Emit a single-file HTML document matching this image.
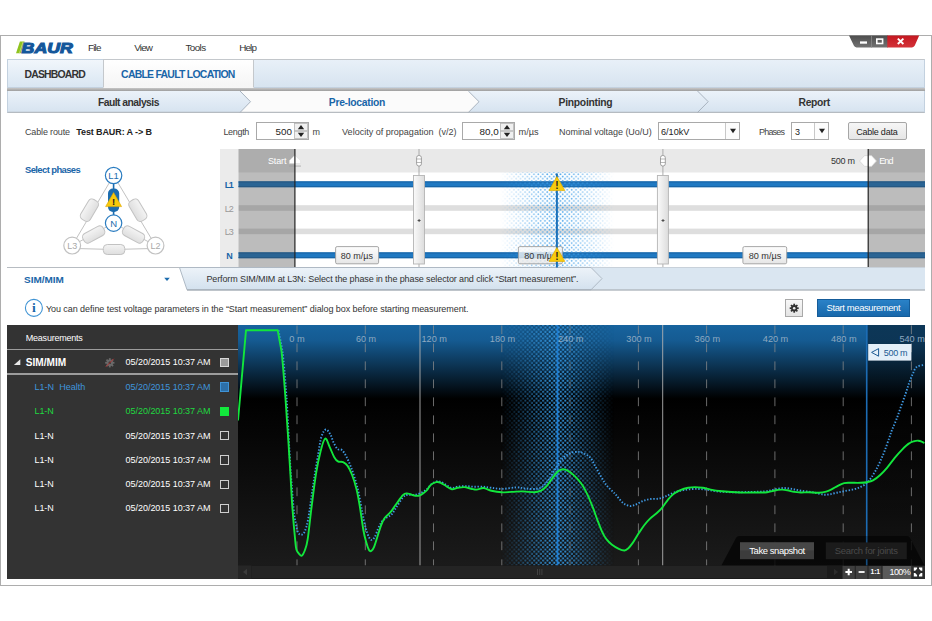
<!DOCTYPE html>
<html><head><meta charset="utf-8"><title>BAUR Cable Fault Location</title>
<style>
html,body{margin:0;padding:0;background:#fff;}
body{width:932px;height:621px;position:relative;overflow:hidden;font-family:"Liberation Sans", sans-serif;}
.a{position:absolute;box-sizing:border-box;}
.t{position:absolute;white-space:pre;line-height:16px;height:16px;}
svg{position:absolute;overflow:visible;}
svg text{font-family:"Liberation Sans", sans-serif;}
</style></head><body>
<!-- window frame -->
<div class="a" style="left:0;top:35px;width:932px;height:551px;border:1px solid #adadad;background:#fff;"></div>

<!-- logo -->
<svg style="left:14px;top:38px" width="64" height="18" viewBox="14 38 64 18">
 <polygon points="16,53.3 19.9,41.6 24.6,41.6 20.7,53.3" fill="#8fc31f"/>
 <polygon points="18.9,53.3 22.8,41.6 23.6,41.6 19.7,53.3" fill="#c3e07e"/>
 <text x="21.6" y="52.7" font-size="14.7" font-weight="700" font-style="italic" fill="#14579b" textLength="51.2" lengthAdjust="spacingAndGlyphs" stroke="#14579b" stroke-width="1.1" stroke-linejoin="miter">BAUR</text>
</svg>

<!-- window buttons -->
<svg style="left:846px;top:35px" width="78" height="16" viewBox="846 35 78 16">
 <defs>
  <linearGradient id="wbg" x1="0" y1="0" x2="0" y2="1"><stop offset="0" stop-color="#4c4c4c"/><stop offset="1" stop-color="#747474"/></linearGradient>
  <linearGradient id="wbr" x1="0" y1="0" x2="0" y2="1"><stop offset="0" stop-color="#c4161f"/><stop offset="1" stop-color="#d4343a"/></linearGradient>
  <clipPath id="wbc"><path d="M849 35.5 L919.2 35.5 L914.8 45.6 Q914 47.4 912 47.4 L856.5 47.4 Q854.6 47.4 853.8 45.6 Z"/></clipPath>
 </defs>
 <g clip-path="url(#wbc)">
  <rect x="846" y="35" width="42" height="13" fill="url(#wbg)"/>
  <rect x="887.3" y="35" width="36" height="13" fill="url(#wbr)"/>
  <rect x="871.2" y="35" width="0.8" height="13" fill="#8a8a8a"/>
 </g>
 <rect x="860" y="41.4" width="7" height="2.3" fill="#fff"/>
 <rect x="876.8" y="39.1" width="5.8" height="4.4" fill="none" stroke="#fff" stroke-width="1.6"/>
 <path d="M897.8 38.6 L903.4 44 M903.4 38.6 L897.8 44" stroke="#fff" stroke-width="1.9" fill="none"/>
</svg>

<!-- tab bar -->
<div class="a" style="left:7px;top:59px;width:918px;height:29px;border:1px solid #c3d1df;border-top-color:#c2c6ca;background:linear-gradient(#e8f0f8,#d7e4f0);"></div>
<div class="a" style="left:7px;top:59px;width:97px;height:29px;border:1px solid #c3d1df;background:linear-gradient(#f1f6fb,#d9e6f2);"></div>
<div class="a" style="left:103px;top:59px;width:151px;height:29px;border:1px solid #c4c8cc;border-bottom-color:#f6f6f6;background:linear-gradient(#fff,#f5f5f5);"></div>
<!-- gray line -->
<div class="a" style="left:7px;top:87.5px;width:918px;height:3.5px;background:linear-gradient(#c6c6c6,#9e9e9e);"></div>

<!-- steps bar -->
<svg style="left:7px;top:91px" width="918" height="22" viewBox="7 91 918 22">
 <defs>
  <linearGradient id="stg" x1="0" y1="0" x2="0" y2="1"><stop offset="0" stop-color="#ebf2f9"/><stop offset="1" stop-color="#d6e3f0"/></linearGradient>
 </defs>
 <rect x="7" y="91" width="918" height="21.5" fill="url(#stg)"/>
 <path d="M240 91 L250.5 101.7 L240 112.5 L468.3 112.5 L479 101.7 L468.3 91 Z" fill="#fbfbfb"/>
 <path d="M240 91 L250.5 101.7 L240 112.5" fill="none" stroke="#a9b4c0" stroke-width="1"/>
 <path d="M468.3 91 L479 101.7 L468.3 112.5" fill="none" stroke="#a9b4c0" stroke-width="1"/>
 <path d="M697.5 91 L708.2 101.7 L697.5 112.5" fill="none" stroke="#a9b4c0" stroke-width="1"/>
 <rect x="7" y="111.8" width="918" height="1" fill="#a8adb3"/>
 <rect x="7" y="91" width="1" height="21.5" fill="#c3d1df"/>
 <rect x="924" y="91" width="1" height="21.5" fill="#c3d1df"/>
</svg>

<!-- inputs row -->
<div class="a" style="left:256px;top:122px;width:53px;height:18px;border:1px solid #a9a9a9;background:#fff;"></div>
<svg style="left:294px;top:123px" width="14" height="16" viewBox="0 0 14 16">
 <rect x="0.5" y="0.5" width="13" height="7.2" fill="#f0f0f0" stroke="#b5b5b5" stroke-width="0.8"/>
 <rect x="0.5" y="8.3" width="13" height="7.2" fill="#f0f0f0" stroke="#b5b5b5" stroke-width="0.8"/>
 <path d="M3.8 6.3 L7 2 L10.2 6.3 Z" fill="#222"/><path d="M3.8 9.8 L7 14 L10.2 9.8 Z" fill="#222"/>
</svg>
<div class="a" style="left:462px;top:122px;width:53px;height:18px;border:1px solid #a9a9a9;background:#fff;"></div>
<svg style="left:500px;top:123px" width="14" height="16" viewBox="0 0 14 16">
 <rect x="0.5" y="0.5" width="13" height="7.2" fill="#f0f0f0" stroke="#b5b5b5" stroke-width="0.8"/>
 <rect x="0.5" y="8.3" width="13" height="7.2" fill="#f0f0f0" stroke="#b5b5b5" stroke-width="0.8"/>
 <path d="M3.8 6.3 L7 2 L10.2 6.3 Z" fill="#222"/><path d="M3.8 9.8 L7 14 L10.2 9.8 Z" fill="#222"/>
</svg>
<div class="a" style="left:658px;top:122px;width:82px;height:18px;border:1px solid #a9a9a9;background:#fff;"></div>
<div class="a" style="left:725px;top:123px;width:14px;height:16px;border-left:1px solid #c8c8c8;background:#fcfcfc;"></div>
<svg style="left:729px;top:128px" width="8" height="6" viewBox="0 0 8 6"><path d="M1 0.8 L7 0.8 L4 5.2 Z" fill="#222"/></svg>
<div class="a" style="left:791px;top:122px;width:38px;height:18px;border:1px solid #a9a9a9;background:#fff;"></div>
<div class="a" style="left:814px;top:123px;width:14px;height:16px;border-left:1px solid #c8c8c8;background:#fcfcfc;"></div>
<svg style="left:818px;top:128px" width="8" height="6" viewBox="0 0 8 6"><path d="M1 0.8 L7 0.8 L4 5.2 Z" fill="#222"/></svg>
<div class="a" style="left:848px;top:122px;width:59px;height:18px;border:1px solid #a6a6a6;border-radius:2px;background:linear-gradient(#f6f6f6,#e6e6e6);"></div>

<!-- phase selector -->
<svg style="left:60px;top:160px" width="110" height="100" viewBox="60 160 110 100">
 <defs>
  <linearGradient id="pill" x1="0" y1="0" x2="0" y2="1"><stop offset="0" stop-color="#f4f4f4"/><stop offset="1" stop-color="#dedede"/></linearGradient>
 </defs>
 <g stroke="#c2c2c2" stroke-width="1" fill="none">
  <line x1="113.6" y1="175.5" x2="72.2" y2="245.6"/>
  <line x1="113.6" y1="175.5" x2="155.5" y2="245.6"/>
  <line x1="113.6" y1="223.1" x2="72.2" y2="245.6"/>
  <line x1="113.6" y1="223.1" x2="155.5" y2="245.6"/>
  <path d="M76 248.5 Q113.6 250.5 151.5 248.5"/>
 </g>
 <line x1="113.6" y1="180" x2="113.6" y2="218" stroke="#1c6cae" stroke-width="1.6"/>
 <g fill="url(#pill)" stroke="#c2c2c2" stroke-width="1">
  <rect x="-11.5" y="-5.5" width="23" height="11" rx="4" transform="translate(89.4 210.2) rotate(-59.4)"/>
  <rect x="-11.5" y="-5.5" width="23" height="11" rx="4" transform="translate(137.8 210.2) rotate(59.4)"/>
  <rect x="-11.5" y="-5.2" width="23" height="10.4" rx="4" transform="translate(93.7 234.5) rotate(-28.5)"/>
  <rect x="-11.5" y="-5.2" width="23" height="10.4" rx="4" transform="translate(133.5 234.5) rotate(28.5)"/>
  <rect x="103.3" y="244.5" width="21.5" height="10" rx="4"/>
 </g>
 <rect x="108" y="188.5" width="11.2" height="23.5" rx="5" fill="#1c6cae"/>
 <circle cx="113.6" cy="175.5" r="8.2" fill="#fff" stroke="#2a7cc0" stroke-width="1.2"/>
 <circle cx="113.6" cy="223.1" r="8.2" fill="#fff" stroke="#2a7cc0" stroke-width="1.2"/>
 <circle cx="72.2" cy="245.6" r="8.4" fill="#fff" stroke="#c2c2c2" stroke-width="1.2"/>
 <circle cx="155.5" cy="245.6" r="8.4" fill="#fff" stroke="#c2c2c2" stroke-width="1.2"/>
 <text x="113.6" y="179" font-size="9.5" text-anchor="middle" fill="#1c6cae">L1</text>
 <text x="113.6" y="226.6" font-size="9.5" text-anchor="middle" fill="#1c6cae">N</text>
 <text x="72.2" y="249" font-size="9" text-anchor="middle" fill="#a9a9a9">L3</text>
 <text x="155.5" y="249" font-size="9" text-anchor="middle" fill="#a9a9a9">L2</text>
 <path d="M113.6 192.6 L121.6 206.6 L105.6 206.6 Z" fill="#f7c90c" stroke="#e0a800" stroke-width="0.6" stroke-linejoin="round"/>
 <text x="113.6" y="205.4" font-size="9.5" font-weight="700" text-anchor="middle" fill="#1c1c1c">!</text>
</svg>

<!-- cable diagram -->
<svg style="left:220px;top:149px" width="705" height="119" viewBox="220 149 705 119">
 <defs>
  <pattern id="dots" x="0" y="0" width="4.44" height="4.44" patternUnits="userSpaceOnUse">
   <circle cx="1.11" cy="1.11" r="0.92" fill="#3a9ce8"/><circle cx="3.33" cy="3.33" r="0.92" fill="#3a9ce8"/>
  </pattern>
  <linearGradient id="fade" x1="0" y1="0" x2="1" y2="0"><stop offset="0" stop-color="#fff" stop-opacity="0"/><stop offset="0.5" stop-color="#fff" stop-opacity="1"/><stop offset="1" stop-color="#fff" stop-opacity="0"/></linearGradient>
  <mask id="fm" maskUnits="userSpaceOnUse" x="500" y="172" width="114" height="96"><rect x="500" y="172" width="114" height="96" fill="url(#fade)"/></mask>
  <linearGradient id="jg" x1="0" y1="0" x2="1" y2="0"><stop offset="0" stop-color="#fafafa"/><stop offset="1" stop-color="#dcdcdc"/></linearGradient>
  <linearGradient id="lbl" x1="0" y1="0" x2="0" y2="1"><stop offset="0" stop-color="#fdfdfd"/><stop offset="1" stop-color="#e6e6e6"/></linearGradient>
 </defs>
 <rect x="220" y="149" width="705" height="118.5" fill="#fff"/>
 <rect x="220" y="149" width="705" height="23.5" fill="#e9e9e9"/>
 <rect x="220" y="149" width="18.5" height="118.5" fill="#ebebeb"/>
 <!-- phase lines -->
 <rect x="238.5" y="205.2" width="686.5" height="5.6" fill="#dedede"/>
 <rect x="238.5" y="228.6" width="686.5" height="5.6" fill="#dedede"/>
 <rect x="238.5" y="181.4" width="686.5" height="5.8" fill="#2079c2"/>
 <rect x="238.5" y="181.4" width="686.5" height="1.1" fill="#1864a6"/><rect x="238.5" y="186.1" width="686.5" height="1.1" fill="#1864a6"/>
 <rect x="238.5" y="252.4" width="686.5" height="5.8" fill="#2079c2"/>
 <rect x="238.5" y="252.4" width="686.5" height="1.1" fill="#1864a6"/><rect x="238.5" y="257.1" width="686.5" height="1.1" fill="#1864a6"/>
 <!-- halftone -->
 <rect x="500" y="172.2" width="114" height="95.3" fill="url(#dots)" mask="url(#fm)"/>
 <!-- start/end shades -->
 <rect x="238.5" y="149" width="56.3" height="118.5" fill="#404040" fill-opacity="0.35"/>
 <rect x="868.2" y="149" width="56.8" height="118.5" fill="#404040" fill-opacity="0.35"/>
 <!-- start / end markers -->
 <path d="M294.8 155.2 L300.6 160.6 L300.6 163.6 L289.4 163.6 L289.4 160.6 Z" fill="#fff" stroke="#d8d8d8" stroke-width="0.5"/>
 <rect x="289.2" y="165.7" width="11.8" height="0.7" fill="#9c9c9c"/>
 <path d="M859.5 161 L864.5 155.6 L871.5 155.6 L876.5 161 L871.5 166.4 L864.5 166.4 Z" fill="#fff" stroke="#d0d0d0" stroke-width="0.7"/>
 <rect x="294.3" y="149" width="1.2" height="118.5" fill="#222"/>
 <rect x="867.6" y="149" width="1.2" height="118.5" fill="#222"/>
 <!-- joints -->
 <g>
  <line x1="419" y1="149" x2="419" y2="267.5" stroke="#9a9a9a" stroke-width="0.8"/>
  <rect x="416.6" y="155.5" width="4.8" height="10.5" rx="2.2" fill="#fff" stroke="#8c8c8c" stroke-width="0.8"/>
  <line x1="416.6" y1="159" x2="421.4" y2="159" stroke="#8c8c8c" stroke-width="0.6"/><line x1="416.6" y1="162.5" x2="421.4" y2="162.5" stroke="#8c8c8c" stroke-width="0.6"/>
  <rect x="413.5" y="175.5" width="11" height="88.5" fill="url(#jg)" stroke="#b4b4b4" stroke-width="0.9"/>
  <path d="M417.6 220.5 h3 M419.1 219 v3" stroke="#444" stroke-width="0.9"/>
 </g>
 <g>
  <line x1="662.9" y1="149" x2="662.9" y2="267.5" stroke="#9a9a9a" stroke-width="0.8"/>
  <rect x="660.5" y="155.5" width="4.8" height="10.5" rx="2.2" fill="#fff" stroke="#8c8c8c" stroke-width="0.8"/>
  <line x1="660.5" y1="159" x2="665.3" y2="159" stroke="#8c8c8c" stroke-width="0.6"/><line x1="660.5" y1="162.5" x2="665.3" y2="162.5" stroke="#8c8c8c" stroke-width="0.6"/>
  <rect x="657.4" y="175.5" width="11" height="88.5" fill="url(#jg)" stroke="#b4b4b4" stroke-width="0.9"/>
  <path d="M661.5 220.5 h3 M663 219 v3" stroke="#444" stroke-width="0.9"/>
 </g>
 <!-- velocity labels -->
 <rect x="335.6" y="246.6" width="43" height="17.2" rx="1.5" fill="url(#lbl)" stroke="#9e9e9e" stroke-width="0.9"/>
 <rect x="518.4" y="246.6" width="44" height="17.2" rx="1.5" fill="url(#lbl)" fill-opacity="0.8" stroke="#9e9e9e" stroke-width="0.9"/>
 <rect x="742.9" y="246.6" width="43.8" height="17.2" rx="1.5" fill="url(#lbl)" stroke="#9e9e9e" stroke-width="0.9"/>
</svg>
<!-- SIM/MIM bar -->
<svg style="left:7px;top:267px" width="918" height="24" viewBox="7 267 918 24">
 <defs>
  <linearGradient id="mg" x1="0" y1="0" x2="0" y2="1"><stop offset="0" stop-color="#edf3f9"/><stop offset="1" stop-color="#d3e1ee"/></linearGradient>
 </defs>
 <rect x="7" y="267" width="918" height="1" fill="#b7bcc2"/>
 <path d="M179.5 267.5 L925 267.5 L925 289.8 L187 289.8 Z" fill="#dae6f1"/>
 <path d="M179.5 267.5 L591 267.5 L602 278.6 L591 289.8 L187 289.8 Z" fill="url(#mg)" stroke="#a9b4c0" stroke-width="0.9"/>
 <rect x="187" y="289.4" width="738" height="1.2" fill="#a3abb4"/>
 <path d="M164.2 277.8 L169.8 277.8 L167 281 Z" fill="#1c6cae"/>
</svg>

<!-- info row -->
<svg style="left:23px;top:297px" width="22" height="22" viewBox="23 297 22 22">
 <circle cx="33.9" cy="307.9" r="8.5" fill="#fff" stroke="#3f93d3" stroke-width="1.1"/>
 <text x="33.9" y="312.4" font-size="13.5" font-weight="700" text-anchor="middle" fill="#1965a8" style="font-family:'Liberation Serif',serif">i</text>
</svg>
<div class="a" style="left:785px;top:299px;width:18px;height:18px;border:1px solid #a9a9a9;background:linear-gradient(#f8f8f8,#e4e4e4);"></div>
<svg style="left:788.8px;top:302.8px" width="10.4" height="10.4" viewBox="-6 -6 12 12">
 <g fill="#333"><circle r="3.6"/>
 <rect x="-1" y="-5.2" width="2" height="10.4"/><rect x="-5.2" y="-1" width="10.4" height="2"/>
 <rect x="-1" y="-5.2" width="2" height="10.4" transform="rotate(45)"/><rect x="-5.2" y="-1" width="10.4" height="2" transform="rotate(45)"/></g>
 <circle r="1.5" fill="#f0f0f0"/>
</svg>
<div class="a" style="left:817px;top:299px;width:93px;height:18px;background:linear-gradient(#2a82c8,#1868ab);border:1px solid #155c99;"></div>

<!-- dark area -->
<div class="a" style="left:7.4px;top:325px;width:230.6px;height:254px;background:#333;"></div>
<div class="a" style="left:7.4px;top:348.8px;width:230.6px;height:1.6px;background:#9c9c9c;"></div>
<div class="a" style="left:7.4px;top:373.3px;width:230.6px;height:1.6px;background:#9c9c9c;"></div>
<svg style="left:13px;top:358px" width="9" height="8" viewBox="13 358 9 8"><path d="M20.3 359.2 L20.3 365 L13.9 365 Z" fill="#e8e8e8"/></svg>
<svg style="left:104.4px;top:356.6px" width="11.6" height="11.6" viewBox="-6.5 -6.5 13 13">
 <g fill="#6a6a6a"><circle r="3.6"/><rect x="-1" y="-5.2" width="2" height="10.4"/><rect x="-5.2" y="-1" width="10.4" height="2"/><rect x="-1" y="-5.2" width="2" height="10.4" transform="rotate(45)"/><rect x="-5.2" y="-1" width="10.4" height="2" transform="rotate(45)"/></g>
 <circle r="1.4" fill="#333"/><line x1="-4.5" y1="4.5" x2="4.5" y2="-4.5" stroke="#b03030" stroke-width="1.1"/>
</svg>
<div class="a" style="left:219.5px;top:357.5px;width:9.5px;height:9.5px;border:1px solid #d6d6d6;background:#9a9a9a;"></div>
<div class="a" style="left:219.5px;top:382.3px;width:9.5px;height:9.5px;border:1px solid #3f93d6;background:#2c6fa8;"></div>
<div class="a" style="left:219.5px;top:406.8px;width:9.5px;height:9.5px;background:#12e83c;"></div>
<div class="a" style="left:219.5px;top:430.9px;width:9.5px;height:9.5px;border:1px solid #cfcfcf;"></div>
<div class="a" style="left:219.5px;top:455.3px;width:9.5px;height:9.5px;border:1px solid #cfcfcf;"></div>
<div class="a" style="left:219.5px;top:479.6px;width:9.5px;height:9.5px;border:1px solid #cfcfcf;"></div>
<div class="a" style="left:219.5px;top:503.7px;width:9.5px;height:9.5px;border:1px solid #cfcfcf;"></div>

<!-- chart -->
<svg style="left:238px;top:325px" width="687" height="254" viewBox="238 325 687 254">
 <defs>
  <linearGradient id="cbg" x1="0" y1="0" x2="0" y2="1">
   <stop offset="0" stop-color="#17639e"/><stop offset="0.06" stop-color="#155b92"/><stop offset="0.29" stop-color="#000"/><stop offset="1" stop-color="#1d1d1d"/>
  </linearGradient>
  <linearGradient id="cbg2" x1="0" y1="0" x2="0" y2="1">
   <stop offset="0" stop-color="#000" stop-opacity="0.45"/><stop offset="0.29" stop-color="#000" stop-opacity="0.3"/><stop offset="1" stop-color="#000" stop-opacity="0.25"/>
  </linearGradient>
  <pattern id="dots2" x="0.3" y="0" width="4.44" height="4.44" patternUnits="userSpaceOnUse">
   <circle cx="1.11" cy="1.11" r="1.12" fill="#379ce6"/><circle cx="3.33" cy="3.33" r="1.12" fill="#379ce6"/>
  </pattern>
  <linearGradient id="fade2" x1="0" y1="0" x2="1" y2="0"><stop offset="0" stop-color="#fff" stop-opacity="0"/><stop offset="0.5" stop-color="#fff" stop-opacity="1"/><stop offset="1" stop-color="#fff" stop-opacity="0"/></linearGradient>
  <mask id="fm2" maskUnits="userSpaceOnUse" x="501" y="325" width="113" height="241"><rect x="501" y="325" width="113" height="241" fill="url(#fade2)"/></mask>
  <clipPath id="cc"><rect x="238" y="325" width="687" height="240.5"/></clipPath>
 </defs>
 <rect x="238" y="325" width="687" height="254" fill="url(#cbg)"/>
 <rect x="867.5" y="325" width="57.5" height="241" fill="url(#cbg2)"/>
 <rect x="501" y="325" width="113" height="240.5" fill="#000" fill-opacity="0.32" mask="url(#fm2)"/>
 <rect x="501" y="325" width="113" height="240.5" fill="url(#dots2)" mask="url(#fm2)"/>
 <g stroke="#8c8c8c" stroke-opacity="0.75" stroke-width="1" stroke-dasharray="8.8 9.2" clip-path="url(#cc)">
  <line x1="297" y1="325.4" x2="297" y2="566"/><line x1="365.3" y1="325.4" x2="365.3" y2="566"/><line x1="433.5" y1="325.4" x2="433.5" y2="566"/><line x1="501.8" y1="325.4" x2="501.8" y2="566"/><line x1="570.1" y1="325.4" x2="570.1" y2="566" stroke-opacity="0.5"/><line x1="638.4" y1="325.4" x2="638.4" y2="566"/><line x1="706.6" y1="325.4" x2="706.6" y2="566"/><line x1="774.9" y1="325.4" x2="774.9" y2="566"/><line x1="843.2" y1="325.4" x2="843.2" y2="566"/><line x1="911.4" y1="325.4" x2="911.4" y2="566"/>
 </g>
 <line x1="420" y1="325" x2="420" y2="565.5" stroke="#b0b0b0" stroke-width="0.9"/>
 <line x1="662.7" y1="325" x2="662.7" y2="565.5" stroke="#b0b0b0" stroke-width="0.9"/>
 <line x1="557.5" y1="325" x2="557.5" y2="565.5" stroke="#1f7acc" stroke-width="1.8"/>
 <line x1="866.7" y1="325" x2="866.7" y2="565.5" stroke="#1c6cb4" stroke-width="1.6"/>
 <g clip-path="url(#cc)">
  <path d="M278.5 330.3 L282.5 351.0 C283.8 362.2 285.2 378.7 286.5 397.3 C287.8 415.9 288.9 444.1 290.1 462.5 C291.3 480.9 292.6 497.5 293.5 507.6 C294.4 517.8 295.1 519.3 295.8 523.4 C296.6 527.5 297.1 530.5 298.0 532.4 C298.9 534.3 300.3 534.9 301.4 534.7 C302.5 534.5 303.7 533.9 304.8 531.3 C305.9 528.7 307.1 524.7 308.2 518.9 C309.3 513.1 310.4 503.9 311.5 496.4 C312.6 488.9 313.8 480.9 314.9 473.8 C316.0 466.7 317.2 459.7 318.3 453.5 C319.4 447.3 320.2 440.5 321.5 436.5 C322.8 432.5 324.4 429.8 325.9 429.5 C327.4 429.2 329.2 432.6 330.5 434.7 C331.8 436.8 332.3 439.9 333.5 442.3 C334.7 444.7 336.1 447.7 337.5 449.0 C338.9 450.3 340.5 448.8 342.0 450.1 C343.5 451.4 345.0 454.1 346.5 456.9 C348.0 459.7 349.5 463.2 351.0 467.1 C352.5 471.1 354.2 476.1 355.5 480.6 C356.8 485.1 357.8 488.8 358.9 494.1 C360.0 499.4 361.2 506.6 362.3 512.2 C363.4 517.8 364.6 523.7 365.7 527.9 C366.8 532.1 368.0 535.4 369.0 537.4 C370.0 539.4 370.8 540.0 371.7 539.9 C372.6 539.8 373.6 538.8 374.7 537.0 C375.8 535.2 376.9 531.5 378.0 529.0 C379.1 526.5 380.1 524.1 381.4 522.3 C382.7 520.5 384.2 519.5 385.9 518.2 C387.6 516.9 389.9 516.2 391.6 514.4 C393.3 512.6 394.2 510.4 396.1 507.6 C398.0 504.8 401.0 499.6 402.9 497.5 C404.8 495.4 405.5 495.2 407.4 494.8 C409.3 494.4 411.9 495.1 414.1 494.8 C416.4 494.5 418.6 494.1 420.9 493.0 C423.2 491.9 425.9 490.0 427.7 488.5 C429.5 487.0 430.0 485.2 431.6 484.0 C433.2 482.8 435.6 481.6 437.3 481.3 C439.0 481.0 440.1 481.6 441.8 482.4 C443.5 483.1 445.7 484.9 447.4 485.8 C449.1 486.7 450.2 487.9 451.9 488.0 C453.6 488.1 455.3 487.0 457.6 486.7 C459.9 486.4 462.9 486.2 465.5 486.2 C468.1 486.2 470.6 486.6 473.4 486.7 C476.2 486.8 479.4 486.5 482.4 486.7 C485.4 486.9 488.0 487.4 491.4 487.8 C494.8 488.2 498.6 489.0 502.7 488.9 C506.8 488.8 512.5 487.5 516.2 487.4 C520.0 487.3 521.8 488.2 525.2 488.5 C528.6 488.8 533.5 489.3 536.5 488.9 C539.5 488.5 541.1 487.8 543.2 486.2 C545.3 484.6 547.0 482.1 548.9 479.5 C550.8 476.9 552.6 473.4 554.5 470.4 C556.4 467.4 558.3 463.8 560.2 461.4 C562.1 459.0 563.7 457.3 565.8 455.8 C567.9 454.3 570.4 453.0 572.6 452.4 C574.9 451.8 577.2 451.7 579.3 452.0 C581.4 452.3 583.1 453.0 585.0 454.0 C586.9 455.0 588.9 456.0 590.6 458.0 C592.3 460.0 593.4 462.9 595.1 465.9 C596.8 468.9 598.8 472.9 600.7 476.1 C602.6 479.3 604.3 482.5 606.4 485.1 C608.5 487.7 611.5 490.3 613.1 491.9 C614.7 493.5 614.8 493.4 616.0 494.8 C617.2 496.2 619.0 498.8 620.5 500.4 C622.0 502.0 623.3 503.4 625.0 504.3 C626.7 505.2 628.8 506.1 630.7 506.1 C632.6 506.1 634.2 505.2 636.3 504.3 C638.4 503.4 640.9 501.8 643.1 500.9 C645.4 500.0 647.2 499.5 649.8 499.1 C652.4 498.7 656.2 499.1 658.8 498.6 C661.4 498.2 663.0 497.4 665.6 496.4 C668.2 495.3 671.6 493.4 674.6 492.3 C677.6 491.2 680.2 490.7 683.6 490.1 C687.0 489.5 691.1 489.0 694.9 488.9 C698.7 488.8 702.4 489.2 706.2 489.6 C710.0 490.0 713.0 490.9 717.5 491.4 C722.0 491.8 727.6 492.2 733.2 492.3 C738.8 492.4 746.0 492.0 751.3 491.9 C756.6 491.8 761.0 491.8 764.8 491.4 C768.5 491.0 770.8 490.2 773.8 489.6 C776.8 489.0 779.9 488.1 782.9 488.0 C785.9 487.9 788.9 488.4 791.9 488.9 C794.9 489.3 797.6 490.2 800.9 490.7 C804.2 491.2 808.7 491.6 811.7 492.1 C814.7 492.6 816.8 493.2 818.9 493.6 C821.0 494.0 822.5 494.6 824.3 494.7 C826.1 494.8 827.6 494.6 829.7 494.3 C831.8 494.0 834.5 493.2 836.9 492.7 C839.3 492.2 841.5 491.8 844.2 491.2 C846.9 490.6 850.5 490.1 853.2 489.4 C855.9 488.7 858.1 488.2 860.4 487.1 C862.6 486.1 864.9 484.7 866.7 483.1 C868.5 481.5 869.7 479.8 871.2 477.7 C872.7 475.6 874.2 473.2 875.7 470.5 C877.2 467.8 878.7 464.8 880.2 461.5 C881.7 458.2 883.2 454.6 884.7 450.7 C886.2 446.8 888.0 441.4 889.2 438.0 C890.4 434.6 890.8 433.1 892.0 430.0 C893.2 426.9 895.0 423.1 896.5 419.2 C898.0 415.3 899.5 410.8 901.0 406.6 C902.5 402.4 904.1 397.9 905.5 394.0 C906.9 390.1 907.9 386.4 909.1 383.1 C910.3 379.8 911.5 376.7 912.7 374.1 C913.9 371.5 914.6 368.8 916.3 367.3 C917.9 365.8 921.2 365.5 922.6 365.1 C924.0 364.7 924.1 365.0 924.4 365.0" fill="none" stroke="#3f9ae4" stroke-width="1.9" stroke-dasharray="1.4 1.7"/>
  <path d="M238.0 420.5 L246.0 330.3 L277.7 330.3 L281.5 351.0 C282.8 362.2 284.3 382.5 285.4 397.3 C286.5 412.1 287.4 426.7 288.3 440.0 C289.2 453.3 289.9 465.9 290.6 477.2 C291.3 488.5 291.6 497.3 292.4 507.6 C293.1 517.9 294.4 532.2 295.1 539.2 C295.8 546.2 295.7 547.0 296.4 549.4 C297.1 551.8 298.2 552.8 299.1 553.9 C300.0 555.0 300.9 556.3 301.8 555.7 C302.8 555.1 303.8 553.2 304.8 550.5 C305.8 547.8 306.6 546.4 307.7 539.2 C308.8 532.1 310.1 518.5 311.5 507.6 C312.9 496.7 314.5 483.2 316.0 473.8 C317.5 464.4 319.1 457.2 320.6 451.3 C322.1 445.4 323.7 439.2 325.2 438.5 C326.7 437.8 328.1 443.7 329.6 446.8 C331.1 449.9 332.7 454.5 334.1 456.9 C335.5 459.3 336.4 460.5 337.9 461.4 C339.4 462.3 341.5 461.4 343.1 462.1 C344.7 462.9 346.1 463.8 347.6 465.9 C349.1 468.0 350.6 471.1 352.1 475.0 C353.6 478.9 355.3 484.2 356.6 489.6 C357.9 495.0 358.9 500.8 360.0 507.6 C361.1 514.4 362.3 524.4 363.4 530.2 C364.4 536.0 365.4 539.3 366.3 542.6 C367.2 545.9 368.2 548.6 369.0 550.0 C369.8 551.4 370.5 551.4 371.3 550.9 C372.1 550.4 372.9 549.8 374.0 547.1 C375.1 544.4 376.8 538.5 378.0 534.7 C379.2 531.0 380.3 527.4 381.4 524.6 C382.5 521.8 383.3 519.9 384.8 517.8 C386.3 515.7 388.6 514.5 390.5 512.2 C392.4 510.0 394.0 507.1 396.1 504.3 C398.2 501.5 401.1 497.0 402.9 495.2 C404.7 493.4 405.2 493.5 406.7 493.4 C408.2 493.3 410.3 494.4 411.9 494.8 C413.5 495.2 414.9 495.9 416.4 495.9 C417.9 495.9 419.2 495.7 420.9 494.8 C422.6 493.9 424.9 492.3 426.5 490.7 C428.1 489.1 428.9 486.5 430.5 485.1 C432.1 483.7 434.4 482.6 436.1 482.2 C437.8 481.8 439.0 482.1 440.7 482.8 C442.4 483.5 444.4 485.1 446.3 486.2 C448.2 487.3 450.0 488.9 451.9 489.2 C453.8 489.5 455.5 488.1 457.6 487.8 C459.7 487.5 462.1 487.0 464.3 487.1 C466.6 487.2 469.0 488.3 471.1 488.7 C473.2 489.1 474.6 489.7 476.7 489.6 C478.8 489.5 481.1 487.8 483.5 488.0 C485.9 488.2 488.4 490.0 491.4 490.7 C494.4 491.4 498.1 492.1 501.5 492.3 C504.9 492.5 508.1 492.0 511.7 491.9 C515.3 491.8 519.2 491.3 523.0 491.4 C526.8 491.5 531.2 492.4 534.2 492.3 C537.2 492.2 538.9 491.7 541.0 490.7 C543.1 489.7 544.7 488.3 546.6 486.2 C548.5 484.1 550.4 480.7 552.3 478.3 C554.2 475.9 556.1 473.1 557.9 471.6 C559.7 470.1 561.2 469.4 562.9 469.3 C564.6 469.2 566.0 469.8 568.0 470.9 C570.0 472.0 572.5 473.9 574.8 476.1 C577.1 478.3 579.5 481.0 581.6 484.0 C583.7 487.0 585.3 490.2 587.2 494.1 C589.1 498.0 591.2 503.3 592.9 507.6 C594.6 511.9 595.9 516.0 597.4 520.0 C598.9 524.0 600.4 528.1 601.9 531.3 C603.4 534.5 604.7 537.0 606.4 539.2 C608.1 541.5 609.9 543.2 612.0 544.8 C614.1 546.4 616.7 547.9 618.8 548.9 C620.9 549.9 623.0 550.6 624.6 550.5 C626.2 550.4 627.0 549.5 628.4 548.2 C629.8 546.9 631.2 545.0 632.9 542.6 C634.6 540.2 636.6 536.5 638.5 533.6 C640.4 530.7 642.3 527.7 644.2 525.2 C646.1 522.8 647.7 520.9 649.8 518.9 C651.9 516.9 654.5 515.2 656.6 513.3 C658.7 511.4 660.3 509.9 662.2 507.6 C664.1 505.4 666.0 502.1 667.9 499.8 C669.8 497.6 671.4 495.7 673.5 494.1 C675.6 492.5 677.8 491.2 680.3 490.1 C682.8 489.1 685.8 488.3 688.2 487.8 C690.6 487.3 692.5 487.1 694.9 487.1 C697.3 487.1 700.2 487.4 702.8 487.8 C705.4 488.2 707.5 489.0 710.7 489.6 C713.9 490.2 717.1 490.7 722.0 491.2 C726.9 491.7 734.4 492.3 740.0 492.5 C745.6 492.7 751.3 492.5 755.8 492.5 C760.3 492.5 764.1 492.6 767.1 492.3 C770.1 492.0 771.4 491.1 773.8 490.7 C776.2 490.2 779.4 489.7 781.7 489.6 C784.0 489.5 785.3 489.9 787.4 490.3 C789.5 490.7 791.9 491.5 794.1 491.9 C796.4 492.3 798.6 492.4 800.9 492.5 C803.2 492.6 805.1 492.3 808.1 492.3 C811.1 492.3 815.9 492.8 818.9 492.7 C821.9 492.6 824.0 492.2 826.1 491.6 C828.2 491.1 829.5 490.4 831.5 489.4 C833.5 488.4 835.7 486.9 837.8 485.8 C839.9 484.8 841.9 483.6 844.2 483.1 C846.5 482.6 848.7 482.9 851.4 482.8 C854.1 482.8 857.8 482.9 860.4 482.8 C863.0 482.7 864.6 482.6 866.7 482.2 C868.8 481.8 870.8 481.6 873.0 480.4 C875.2 479.2 877.8 477.2 880.2 475.0 C882.6 472.8 885.0 470.2 887.4 467.3 C889.8 464.4 892.3 460.8 894.7 457.9 C897.1 455.0 899.5 452.2 901.9 449.8 C904.3 447.4 907.0 444.8 909.1 443.4 C911.2 441.9 913.0 441.6 914.5 441.1 C916.0 440.7 916.9 440.6 918.1 440.7 C919.3 440.8 920.7 441.2 921.7 441.6 C922.8 442.0 924.0 442.9 924.4 443.1" fill="none" stroke="#12e63c" stroke-width="1.9" stroke-linejoin="round"/>
 </g>
 <!-- 500 m flag -->
 <rect x="868.2" y="344" width="43.2" height="16.6" fill="#e4eff9"/>
 <path d="M878.6 348.6 L871.6 352.4 L878.6 356.2 Z" fill="none" stroke="#1c5a94" stroke-width="1"/>
 <!-- toolbar -->
 <path d="M721.4 565.5 L736 538 Q737 536 739.5 536 L906.5 536 Q909 536 910 538 L924.5 565.5 Z" fill="#060606" fill-opacity="0.85"/>
 <line x1="866.7" y1="536" x2="866.7" y2="565.5" stroke="#1c6cb4" stroke-width="1.6" stroke-opacity="0.65"/>
 <rect x="740" y="542.4" width="74" height="16.8" fill="#3c3c3c"/>
 <rect x="740" y="542.4" width="74" height="8" fill="#474747"/>
 <rect x="825.8" y="542.4" width="81" height="16.8" fill="#1b1b1b"/>
 <!-- scrollbar -->
 <rect x="238" y="565.5" width="687" height="13" fill="#1b1b1b"/>
 <rect x="252" y="566" width="575" height="12" fill="#242424"/>
 <rect x="238" y="565.5" width="13.5" height="13" fill="#262626"/>
 <path d="M247 568.8 L243 572 L247 575.2 Z" fill="#3c3c3c"/>
 <path d="M834 568.8 L838 572 L834 575.2 Z" fill="#2c2c2c"/>
 <path d="M537.5 569 v6 M539.7 569 v6 M541.9 569 v6" stroke="#4a4a4a" stroke-width="0.8"/>
 <rect x="842.5" y="566" width="12.3" height="13" fill="#3f3f3f"/>
 <rect x="855.6" y="566" width="12" height="13" fill="#3f3f3f"/>
 <rect x="868.4" y="566" width="13.2" height="13" fill="#3f3f3f"/>
 <rect x="882.5" y="566" width="29" height="13" fill="#5a5a5a"/>
 <rect x="911.5" y="566" width="13.5" height="13" fill="#2c2c2c"/>
 <path d="M845.4 572 h6.6 M848.7 568.7 v6.6" stroke="#fff" stroke-width="2"/>
 <path d="M858.6 572 h6" stroke="#fff" stroke-width="1.8"/>
 <g fill="#fff">
  <path d="M913.8 567.4 h3.3 v1.4 l-1.9 1.9 h-1.4 Z"/><path d="M922.3 567.4 h-3.3 v1.4 l1.9 1.9 h1.4 Z"/>
  <path d="M913.8 576.4 h3.3 v-1.4 l-1.9 -1.9 h-1.4 Z"/><path d="M922.3 576.4 h-3.3 v-1.4 l1.9 -1.9 h1.4 Z"/>
 </g>
</svg>
<span class="t" style="left:88.0px;top:40.0px;font-size:9.90px;letter-spacing:-0.82px;font-weight:400;color:#333;">File</span>
<span class="t" style="left:134.2px;top:40.0px;font-size:9.90px;letter-spacing:-0.83px;font-weight:400;color:#333;">View</span>
<span class="t" style="left:185.5px;top:40.0px;font-size:9.90px;letter-spacing:-0.60px;font-weight:400;color:#333;">Tools</span>
<span class="t" style="left:239.2px;top:40.0px;font-size:9.90px;letter-spacing:-0.85px;font-weight:400;color:#333;">Help</span>
<span class="t" style="left:24.5px;top:66.5px;font-size:10.44px;letter-spacing:-0.83px;font-weight:700;color:#333;">DASHBOARD</span>
<span class="t" style="left:121.1px;top:66.5px;font-size:10.44px;letter-spacing:-0.74px;font-weight:700;color:#1965a8;">CABLE FAULT LOCATION</span>
<span class="t" style="left:98.0px;top:94.5px;font-size:10.35px;letter-spacing:-0.54px;font-weight:700;color:#333;">Fault analysis</span>
<span class="t" style="left:328.8px;top:94.5px;font-size:10.35px;letter-spacing:-0.29px;font-weight:700;color:#1965a8;">Pre-location</span>
<span class="t" style="left:558.5px;top:94.5px;font-size:10.35px;letter-spacing:-0.27px;font-weight:700;color:#333;">Pinpointing</span>
<span class="t" style="left:798.6px;top:94.5px;font-size:10.35px;letter-spacing:-0.37px;font-weight:700;color:#333;">Report</span>
<span class="t" style="left:25.0px;top:124.0px;font-size:9.00px;letter-spacing:-0.15px;font-weight:400;color:#444;">Cable route</span>
<span class="t" style="left:76.3px;top:124.0px;font-size:9.00px;letter-spacing:-0.11px;font-weight:700;color:#222;">Test BAUR: A -&gt; B</span>
<span class="t" style="left:223.4px;top:124.0px;font-size:9.00px;letter-spacing:-0.31px;font-weight:400;color:#444;">Length</span>
<span class="t" style="left:275.5px;top:123.5px;font-size:9.83px;letter-spacing:0.00px;font-weight:400;color:#222;">500</span>
<span class="t" style="left:312.5px;top:124.0px;font-size:9.00px;letter-spacing:-0.01px;font-weight:400;color:#444;">m</span>
<span class="t" style="left:342.1px;top:124.0px;font-size:9.04px;letter-spacing:0.00px;font-weight:400;color:#444;">Velocity of propagation  (v/2)</span>
<span class="t" style="left:479.5px;top:123.5px;font-size:9.86px;letter-spacing:0.00px;font-weight:400;color:#222;">80,0</span>
<span class="t" style="left:518.5px;top:124.0px;font-size:9.19px;letter-spacing:0.00px;font-weight:400;color:#444;">m/µs</span>
<span class="t" style="left:559.0px;top:124.0px;font-size:9.00px;letter-spacing:-0.04px;font-weight:400;color:#444;">Nominal voltage (Uo/U)</span>
<span class="t" style="left:661.0px;top:124.0px;font-size:9.15px;letter-spacing:0.00px;font-weight:400;color:#222;">6/10kV</span>
<span class="t" style="left:759.0px;top:124.0px;font-size:9.00px;letter-spacing:-0.80px;font-weight:400;color:#444;">Phases</span>
<span class="t" style="left:795.0px;top:124.0px;font-size:9.00px;letter-spacing:-0.01px;font-weight:400;color:#222;">3</span>
<span class="t" style="left:856.3px;top:123.5px;font-size:9.00px;letter-spacing:-0.24px;font-weight:400;color:#222;">Cable data</span>
<span class="t" style="left:25.0px;top:162.1px;font-size:9.45px;letter-spacing:-0.60px;font-weight:700;color:#1965a8;">Select phases</span>
<span class="t" style="left:268.0px;top:153.0px;font-size:9.00px;letter-spacing:-0.13px;font-weight:400;color:#fff;">Start</span>
<span class="t" style="left:224.7px;top:177.0px;font-size:9.00px;letter-spacing:-1.50px;font-weight:700;color:#1965a8;">L1</span>
<span class="t" style="left:224.7px;top:200.8px;font-size:9.00px;letter-spacing:-1.01px;font-weight:400;color:#999;">L2</span>
<span class="t" style="left:224.7px;top:224.0px;font-size:9.00px;letter-spacing:-1.01px;font-weight:400;color:#999;">L3</span>
<span class="t" style="left:226.2px;top:247.9px;font-size:9.00px;letter-spacing:-0.01px;font-weight:700;color:#1965a8;">N</span>
<span class="t" style="left:340.8px;top:247.5px;font-size:9.00px;letter-spacing:-0.00px;font-weight:400;color:#333;">80 m/µs</span>
<span class="t" style="left:524.2px;top:247.5px;font-size:9.00px;letter-spacing:-0.00px;font-weight:400;color:#333;">80 m/µs</span>
<span class="t" style="left:748.7px;top:247.5px;font-size:9.14px;letter-spacing:0.00px;font-weight:400;color:#333;">80 m/µs</span>
<span class="t" style="left:831.0px;top:153.0px;font-size:9.00px;letter-spacing:-0.25px;font-weight:400;color:#333;">500 m</span>
<span class="t" style="left:879.2px;top:153.0px;font-size:9.00px;letter-spacing:-0.91px;font-weight:400;color:#fff;">End</span>
<span class="t" style="left:24.0px;top:272.0px;font-size:9.97px;letter-spacing:0.00px;font-weight:700;color:#1965a8;">SIM/MIM</span>
<span class="t" style="left:206.4px;top:270.8px;font-size:9.00px;letter-spacing:-0.11px;font-weight:400;color:#333;">Perform SIM/MIM at L3N: Select the phase in the phase selector and click “Start measurement”.</span>
<span class="t" style="left:45.9px;top:300.8px;font-size:9.00px;letter-spacing:-0.06px;font-weight:400;color:#333;">You can define test voltage parameters in the “Start measurement” dialog box before starting measurement.</span>
<span class="t" style="left:826.6px;top:300.0px;font-size:9.45px;letter-spacing:-0.39px;font-weight:400;color:#fff;">Start measurement</span>
<span class="t" style="left:25.8px;top:329.5px;font-size:9.00px;letter-spacing:-0.23px;font-weight:400;color:#fff;">Measurements</span>
<span class="t" style="left:25.8px;top:355.0px;font-size:10.08px;letter-spacing:0.00px;font-weight:700;color:#fff;">SIM/MIM</span>
<span class="t" style="left:125.6px;top:354.2px;font-size:9.00px;letter-spacing:-0.04px;font-weight:400;color:#fff;">05/20/2015 10:37 AM</span>
<span class="t" style="left:125.6px;top:378.8px;font-size:9.00px;letter-spacing:-0.04px;font-weight:400;color:#3f95dc;">05/20/2015 10:37 AM</span>
<span class="t" style="left:34.5px;top:378.8px;font-size:9.07px;letter-spacing:0.00px;font-weight:400;color:#3f95dc;">L1-N  Health</span>
<span class="t" style="left:125.6px;top:402.9px;font-size:9.00px;letter-spacing:-0.04px;font-weight:400;color:#20d840;">05/20/2015 10:37 AM</span>
<span class="t" style="left:34.5px;top:402.9px;font-size:9.00px;letter-spacing:-0.07px;font-weight:400;color:#20d840;">L1-N</span>
<span class="t" style="left:125.6px;top:427.6px;font-size:9.00px;letter-spacing:-0.04px;font-weight:400;color:#fff;">05/20/2015 10:37 AM</span>
<span class="t" style="left:34.5px;top:427.6px;font-size:9.00px;letter-spacing:-0.07px;font-weight:400;color:#fff;">L1-N</span>
<span class="t" style="left:125.6px;top:452.0px;font-size:9.00px;letter-spacing:-0.04px;font-weight:400;color:#fff;">05/20/2015 10:37 AM</span>
<span class="t" style="left:34.5px;top:452.0px;font-size:9.00px;letter-spacing:-0.07px;font-weight:400;color:#fff;">L1-N</span>
<span class="t" style="left:125.6px;top:476.3px;font-size:9.00px;letter-spacing:-0.04px;font-weight:400;color:#fff;">05/20/2015 10:37 AM</span>
<span class="t" style="left:34.5px;top:476.3px;font-size:9.00px;letter-spacing:-0.07px;font-weight:400;color:#fff;">L1-N</span>
<span class="t" style="left:125.6px;top:500.4px;font-size:9.00px;letter-spacing:-0.04px;font-weight:400;color:#fff;">05/20/2015 10:37 AM</span>
<span class="t" style="left:34.5px;top:500.4px;font-size:9.00px;letter-spacing:-0.07px;font-weight:400;color:#fff;">L1-N</span>
<span class="t" style="left:289.3px;top:330.5px;font-size:9.24px;letter-spacing:0.00px;font-weight:400;color:#8ea9c0;">0 m</span>
<span class="t" style="left:356.1px;top:330.5px;font-size:9.00px;letter-spacing:-0.07px;font-weight:400;color:#8ea9c0;">60 m</span>
<span class="t" style="left:421.5px;top:330.5px;font-size:9.17px;letter-spacing:0.00px;font-weight:400;color:#8ea9c0;">120 m</span>
<span class="t" style="left:489.8px;top:330.5px;font-size:9.17px;letter-spacing:0.00px;font-weight:400;color:#8ea9c0;">180 m</span>
<span class="t" style="left:558.0px;top:330.5px;font-size:9.17px;letter-spacing:0.00px;font-weight:400;color:#8ea9c0;">240 m</span>
<span class="t" style="left:626.3px;top:330.5px;font-size:9.17px;letter-spacing:0.00px;font-weight:400;color:#8ea9c0;">300 m</span>
<span class="t" style="left:694.6px;top:330.5px;font-size:9.17px;letter-spacing:0.00px;font-weight:400;color:#8ea9c0;">360 m</span>
<span class="t" style="left:762.8px;top:330.5px;font-size:9.17px;letter-spacing:0.00px;font-weight:400;color:#8ea9c0;">420 m</span>
<span class="t" style="left:831.1px;top:330.5px;font-size:9.17px;letter-spacing:0.00px;font-weight:400;color:#8ea9c0;">480 m</span>
<span class="t" style="left:899.4px;top:330.5px;font-size:9.17px;letter-spacing:0.00px;font-weight:400;color:#8ea9c0;">540 m</span>
<span class="t" style="left:883.8px;top:344.8px;font-size:9.00px;letter-spacing:-0.30px;font-weight:400;color:#1c5a94;">500 m</span>
<span class="t" style="left:749.3px;top:543.2px;font-size:9.45px;letter-spacing:-0.42px;font-weight:400;color:#fff;">Take snapshot</span>
<span class="t" style="left:834.8px;top:543.2px;font-size:9.45px;letter-spacing:-0.32px;font-weight:400;color:#4a4a4a;">Search for joints</span>
<span class="t" style="left:889.5px;top:564.0px;font-size:9.00px;letter-spacing:-0.57px;font-weight:400;color:#fff;">100%</span>
<span class="t" style="left:870.6px;top:564.0px;font-size:6.75px;letter-spacing:-0.18px;font-weight:700;color:#fff;">1:1</span>
<!-- fault marker drawn above labels -->
<svg style="left:540px;top:170px" width="34" height="98" viewBox="540 170 34 98">
 <rect x="555.9" y="173.5" width="2" height="94" fill="#1c70b8"/>
 <path d="M556.9 176.6 L564.8 190.6 L549 190.6 Z" fill="#f8cb0e" stroke="#e3ad00" stroke-width="0.7" stroke-linejoin="round"/>
 <text x="556.9" y="189.3" font-size="10" font-weight="700" text-anchor="middle" fill="#1c1c1c">!</text>
 <path d="M556.9 247.4 L564.8 261.4 L549 261.4 Z" fill="#f8cb0e" stroke="#e3ad00" stroke-width="0.7" stroke-linejoin="round"/>
 <text x="556.9" y="260.1" font-size="10" font-weight="700" text-anchor="middle" fill="#1c1c1c">!</text>
</svg>

</body></html>
